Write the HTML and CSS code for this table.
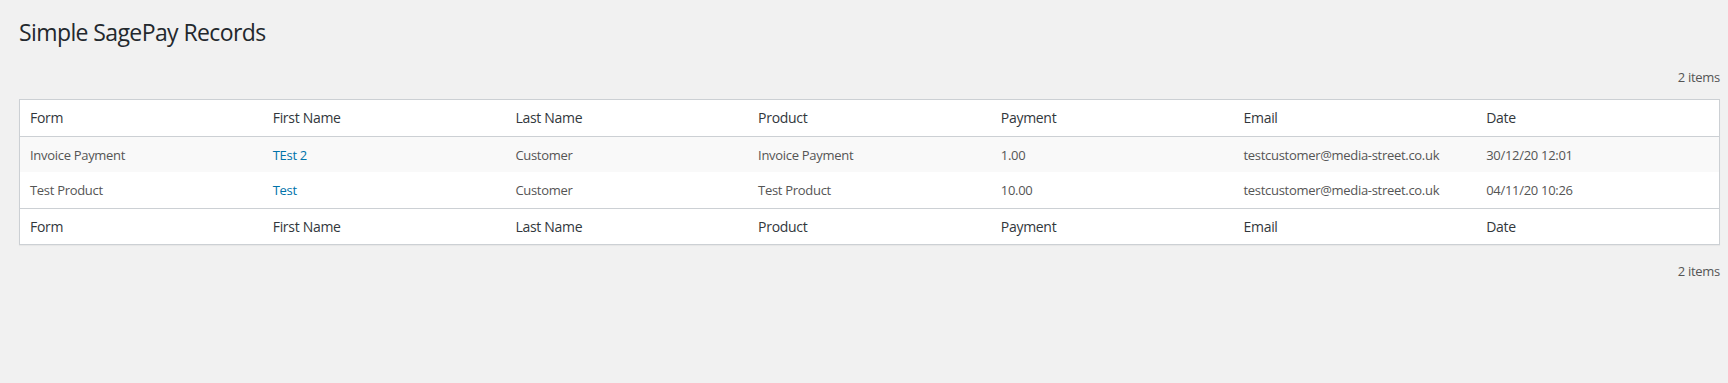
FILE: index.html
```html
<!DOCTYPE html>
<html lang="en">
<head>
<meta charset="utf-8">
<title>Simple SagePay Records</title>
<link rel="stylesheet" href="styles.css">
</head>
<body>
<div class="wrap">
  <h1 class="page-title">Simple SagePay Records</h1>
  <div class="tablenav top"><span class="displaying-num">2 items</span></div>
  <table class="list-table">
    <thead>
      <tr><th>Form</th><th>First Name</th><th>Last Name</th><th>Product</th><th>Payment</th><th>Email</th><th>Date</th></tr>
    </thead>
    <tbody>
      <tr class="alt">
        <td>Invoice Payment</td><td><a href="#">TEst 2</a></td><td>Customer</td><td>Invoice Payment</td><td>1.00</td><td>testcustomer@media-street.co.uk</td><td>30/12/20 12:01</td>
      </tr>
      <tr>
        <td>Test Product</td><td><a href="#">Test</a></td><td>Customer</td><td>Test Product</td><td>10.00</td><td>testcustomer@media-street.co.uk</td><td>04/11/20 10:26</td>
      </tr>
    </tbody>
    <tfoot>
      <tr><th>Form</th><th>First Name</th><th>Last Name</th><th>Product</th><th>Payment</th><th>Email</th><th>Date</th></tr>
    </tfoot>
  </table>
  <div class="tablenav bottom"><span class="displaying-num">2 items</span></div>
</div>
</body>
</html>
```
FILE: styles.css
```css
html, body {
  margin: 0;
  padding: 0;
  background: #f1f1f1;
  height: 100%;
}
body {
  font-family: "Open Sans", "Noto Sans", sans-serif;
  color: #444;
  font-size: 13px;
}
.wrap {
  padding: 0 8px 0 19px;
}
.page-title {
  margin: 0;
  padding: 17px 0 4px;
  font-size: 23px;
  font-weight: 400;
  line-height: 30px;
  letter-spacing: -0.6px;
  color: #23282d;
}
.tablenav {
  display: flex;
  justify-content: flex-end;
  line-height: 20px;
  font-size: 13px;
  letter-spacing: -0.3px;
  color: #555;
}
.tablenav.top {
  padding-top: 16px;
  margin-bottom: 12px;
}
.tablenav.bottom {
  padding-top: 16px;
}
.list-table {
  width: 100%;
  table-layout: fixed;
  border-collapse: separate;
  border-spacing: 0;
  background: #fff;
  border: 1px solid #ccd0d4;
  box-shadow: 0 1px 1px rgba(0,0,0,0.04);
}
.list-table th {
  text-align: left;
  font-weight: 400;
  font-size: 14px;
  line-height: 1.4em;
  letter-spacing: -0.3px;
  padding: 8px 10px;
  color: #32373c;
}
.list-table thead th {
  border-bottom: 1px solid #ccd0d4;
}
.list-table tfoot th {
  border-top: 1px solid #ccd0d4;
}
.list-table td {
  font-size: 13px;
  line-height: 1.5em;
  letter-spacing: -0.3px;
  padding: 9px 10px 7px;
  color: #555;
  white-space: nowrap;
}
.list-table tr.alt td {
  background: #f9f9f9;
}
.list-table a {
  color: #0073aa;
  text-decoration: none;
}
```
